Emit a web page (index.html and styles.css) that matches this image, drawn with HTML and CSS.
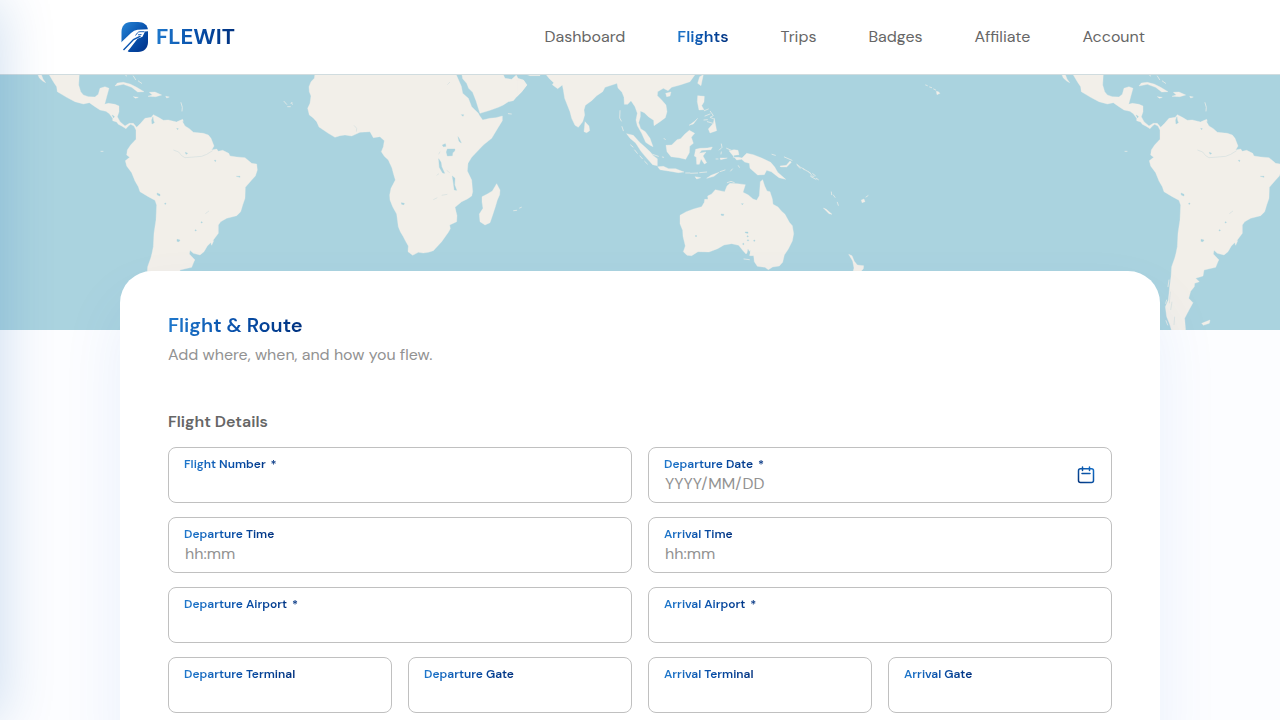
FILE: index.html
```html
<!DOCTYPE html>
<html lang="en">
<head>
<meta charset="utf-8">
<meta name="viewport" content="width=device-width, initial-scale=1">
<title>Flewit – Flight &amp; Route</title>
<link rel="stylesheet" href="styles.css">
</head>
<body>
<header class="header">
  <div class="header-inner">
    <a class="logo" href="#">
      <svg class="logo-mark" viewBox="0 0 28 30" aria-hidden="true">
        <defs><linearGradient id="mark" x1="0" y1="0" x2="1" y2="1"><stop offset="0" stop-color="#2786d6"/><stop offset=".55" stop-color="#0750ac"/><stop offset="1" stop-color="#002f86"/></linearGradient></defs>
        <path fill="url(#mark)" d="M11 0H18C24 0 27.500 3 28 8V20C28 26 24 30 18 30H9L4 27 1.500 20V10C1.500 4 5 0 11 0Z"/>
        <path fill="#fff" d="M0 21.500 11 11Q14 8 17.500 7.800L28 7.200V9.200L25 9.600 22.500 14.800 17.500 16.800 10 26.500 7 30H0Z"/>
        <path fill="none" stroke="#0b55b0" stroke-width="1.400" d="M3.500 28 13.500 17.500 20.500 14.200"/>
        <path fill="none" stroke="#0b55b0" stroke-width=".9" d="M15.500 13.500 17.500 10.800Q18.300 9.800 20 9.700H24.500M18 12.800 21.500 12.500"/>
      </svg>
      <span class="logo-text">FLEWIT</span>
    </a>
    <nav class="nav">
      <a href="#">Dashboard</a>
      <a href="#" class="active" aria-current="page">Flights</a>
      <a href="#">Trips</a>
      <a href="#">Badges</a>
      <a href="#">Affiliate</a>
      <a href="#">Account</a>
    </nav>
  </div>
</header>

<svg class="map" viewBox="0 0 1280 255" preserveAspectRatio="xMidYMin slice" role="img" aria-label="World map">
  <defs>
    <g id="americas" transform="translate(0 -5) scale(.33333)">
      <path d="M145 10 160 35 170 50 172 65 185 73 200 82 225 95 250 102 268 98 285 110 300 120 318 124 328 131 338 145 338 152 350 156 355 163 365 168 378 176 385 168 392 163 402 168 408 180 408 208 392 225 382 240 380 255 389 262 376 272 380 288 395 308 405 333 415 350 420 365 445 380 465 391 470 405 468 450 462 490 460 530 456 550 452 565 443 590 441 620 437 650 433 690 424 710 428 740 438 765 443 783 485 783 482 745 495 720 507 698 494 685 500 664 511 650 512 640 526 635 515 625 537 618 540 600 575 592 583 572 585 570 568 552 570 541 580 550 600 555 612 545 622 528 640 510 655 490 655 465 662 455 680 445 710 437 722 425 728 405 735 385 736 352 755 330 766 318 772 300 770 282 755 280 735 263 710 261 690 258 686 250 668 241 655 244 650 237 635 240 642 228 633 205 625 195 610 190 580 187 568 176 555 168 545 151 530 156 505 150 490 151 475 142 460 134 454 142 435 145 422 160 410 172 400 160 388 160 375 168 360 155 352 140 357 125 357 108 345 103 325 100 314 103 320 80 327 55 315 50 300 55 295 73 285 81 265 80 250 75 242 65 236 45 238 10Z"/>
      <path d="M112 10 125 16 129 27 137 38 128 33 118 24ZM345 48 352 39 370 37 390 42 410 52 432 65 413 66 395 52 370 43ZM444 79 457 75 448 67 465 66 485 75 467 80ZM400 80 415 82 407 85ZM497 79 508 81 500 84ZM533 760 558 750 556 760 538 766ZM532 155 548 148 550 154ZM635 526 630 510 641 512Z"/>
      <g class="water"><path d="M455 150 459 140 460 151 463 158 456 162ZM471 369 480 373 480 378 472 375ZM531 508 540 510 537 515 531 514ZM530 175 535 176 533 179ZM556 247 563 250 558 253ZM709 319 720 319 720 322ZM336 135 343 139 341 144ZM643 271 648 271 646 275Z"/><circle cx="496" cy="401" r="2"/><circle cx="605" cy="457" r="2"/><circle cx="587" cy="481" r="2"/></g>
      <path class="river" d="M638 242 620 253 605 259 570 262 555 263 545 257 536 246 520 240M627 423 616 431M439 665 436 700M444 695 440 720M452 740 450 765"/>
      <path class="isle" d="M543 98 547 112 546 123M375 14 380 18M400 18 407 29M415 33 425 40M303 244 309 244M852 94 860 103M875 99 877 103M863 110 871 110M435 630 432 650M428 690 425 700M426 752 431 765"/>
    </g>
  </defs>
  <g class="land">
    <use href="#americas"/>
    <use href="#americas" x="1024"/>
    <g transform="translate(290 -5) scale(.33333)">
      <path d="M75 10 73 25 63 35 57 50 58 65 63 78 60 100 53 115 58 135 69 143 80 155 87 171 115 190 135 202 150 197 165 195 185 198 210 187 240 185 250 203 270 200 283 212 280 230 274 245 283 259 295 270 306 294 310 310 316 330 303 355 299 375 300 390 308 410 320 432 325 470 331 485 340 500 347 514 355 528 354 545 368 556 385 547 400 549 415 547 430 542 455 515 475 487 481 476 479 465 500 455 501 437 495 412 515 395 532 387 545 378 548 365 545 330 532 303 534 280 545 262 560 246 580 225 605 205 620 180 637 152 637 138 618 143 600 145 578 150 568 136 565 130 545 110 535 85 518 70 514 49 497 10Z"/>
      <path d="M515 10 518 26 530 40 536 55 548 67 558 92 565 115 570 130 600 121 625 112 640 105 655 95 670 92 680 80 695 65 711 45 700 30 684 25 679 15 665 28 645 25 638 10ZM620 341 630 360 629 374 622 390 617 407 609 432 600 458 585 465 570 455 568 432 579 415 576 395 576 380 592 372 607 363ZM700 10 750 10 750 17 720 17Z"/>
      <g class="water"><path d="M472 237 495 237 494 243 488 248 487 257 472 258 469 246ZM446 266 453 277 455 290 464 310 458 309 448 292ZM487 318 495 325 494 345 500 361 493 360 490 338ZM504 200 508 206 514 219 507 214ZM334 398 343 400 342 404 335 403ZM514 134 521 134 519 139ZM457 225 466 221 468 229 460 230Z"/></g>
      <path class="river" d="M430 389 442 383M455 376 472 373M440 316 447 311M470 301 479 308M192 166 200 175 199 185M472 44 480 36M446 253 450 245"/>
      <path class="isle" d="M655 131 664 132M671 422 680 421M689 414 694 412M3 101 6 97"/>
    </g>
    <g transform="translate(520 -5) scale(.33333)">
      <path d="M30 10 75 10 89 27 101 38 97 44 113 56 127 45 130 60 134 85 150 125 155 145 165 166 175 172 188 155 194 135 192 120 196 106 215 92 230 77 248 65 255 52 285 42 291 40 294 54 306 67 312 82 313 103 323 103 333 92 345 110 352 130 348 150 352 167 365 190 377 217 389 225 399 230 390 205 376 185 362 176 356 158 361 140 361 123 373 128 385 140 401 151 402 167 420 155 436 143 441 125 438 105 425 90 412 77 413 65 430 55 444 62 455 52 480 45 510 35 528 10ZM-10 30 10 30 20 45 5 65-10 80ZM195 155 207 168 209 182 200 188 192 185ZM437 70 453 66 450 78 440 80ZM550 14 543 47 533 40 539 20Z"/>
      <path d="M320 191 340 196 358 216 375 231 391 246 400 257 412 266 412 287 398 284 378 262 363 244 347 219 330 205ZM413 290 430 289 446 296 467 296 492 306 475 308 445 303 420 299ZM438 226 455 225 471 209 482 206 494 193 508 181 524 190 514 202 520 220 509 229 508 248 497 268 477 263 453 260 441 245ZM527 238 540 235 562 234 577 231 573 239 545 241 538 250 558 246 549 258 560 278 553 282 543 267 538 283 530 283 529 262 523 258ZM627 242 642 239 654 241 657 254 642 256 640 262 656 262 666 264 680 250 700 254 727 265 752 277 764 291 773 307 797 328 777 323 754 305 740 301 733 314 713 315 690 295 688 280 674 276 665 268 650 270 634 251ZM780 288 799 286 810 273 814 277 800 291 782 291ZM533 77 553 79 552 96 545 107 552 119 537 120 532 95ZM565 177 580 160 583 145 590 182 570 189ZM507 166 525 153 533 145 520 162ZM560 325 573 316 597 307 582 319ZM600 264 622 264 602 269ZM525 320 542 323 530 327Z"/>
      <path class="isle" d="M553 122 565 117M555 138 570 132M552 150 562 149M571 124 580 137 570 142 582 147M562 155 579 160M332 225 339 231M344 240 352 250M360 258 367 266M374 274 382 282M398 253 415 259M427 261 431 262M432 205 436 209M497 309 510 309M512 310 533 309M539 308 560 306M600 305 615 300M604 222 606 232 598 240M604 246 603 252M655 287 658 292M632 303 637 297M793 261 816 271M831 283 843 293M850 296 859 302M866 305 875 315M873 320 888 328M300 122 299 144 304 153M306 170 310 182M620 235 632 240M588 267 594 267M756 253 766 256"/>
      <path d="M480 436 499 425 521 417 545 410 553 397 554 388 564 388 563 378 575 372 586 359 603 363 614 365 621 348 630 340 652 341 676 344 669 367 685 375 699 387 710 391 718 377 721 335 728 329 734 348 741 363 750 365 757 387 759 403 774 411 784 423 795 433 808 457 817 467 821 491 817 513 805 537 793 555 788 577 778 588 758 591 745 599 735 592 712 589 703 575 701 557 689 557 691 541 678 552 668 541 656 526 635 521 612 525 593 536 567 546 534 545 515 557 501 556 490 545 496 528 489 499 488 481 480 461Z"/>
      <path class="isle" d="M672 567 688 569M622 338 633 334 643 338"/>
      <g class="water"><path d="M603 432 612 433 610 437 604 436ZM675 486 684 486 684 490 677 489ZM664 401 670 401 667 404ZM684 538 690 550 682 551Z"/><circle cx="528" cy="498" r="2"/><circle cx="683" cy="499" r="2"/><circle cx="684" cy="511" r="2"/><circle cx="703" cy="512" r="2"/><circle cx="670" cy="522" r="2"/></g>
    </g>
    <g transform="translate(780 -5) scale(.33333)">
      <path d="M206 553 216 557 223 574 232 585 251 587 250 596 238 610 218 610 222 594 218 573ZM130 414 139 418 156 433 147 431ZM244 390 252 387 255 395 246 398ZM469 64 475 65 480 70 471 74Z"/>
      <path class="isle" d="M258 381 264 377M437 45 442 47M449 51 455 53M461 57 467 60M154 366 155 374M160 375 165 382M172 397 175 406M51 285 60 295M65 293 73 299M80 302 92 310M92 318 102 319M98 311 106 317M109 325 115 329"/>
    </g>
  </g>
</svg>

<main class="card">
  <h1 class="title"><span class="tint">Flight &amp; Route</span></h1>
  <p class="subtitle">Add where, when, and how you flew.</p>
  <form>
    <h2 class="section">Flight Details</h2>
    <div class="grid">
      <div class="field wide"><label class="tint" for="number">Flight Number <span class="req">*</span></label><input id="number" type="text" required></div>
      <div class="field wide"><label class="tint" for="date">Departure Date <span class="req">*</span></label><input id="date" type="text" placeholder="YYYY/MM/DD" required>
        <button class="calendar" type="button" aria-label="Choose date">
          <svg viewBox="0 0 18 18" aria-hidden="true"><defs><linearGradient id="cal" gradientUnits="userSpaceOnUse" x1="0" y1="18" x2="18" y2="0"><stop offset="0" stop-color="#003078"/><stop offset="1" stop-color="#1473cf"/></linearGradient></defs><path fill="none" stroke="url(#cal)" stroke-width="1.500" stroke-linecap="round" d="M3.500 2.700H14.500Q16.500 2.700 16.500 4.700V14.500Q16.500 16.500 14.500 16.500H3.500Q1.500 16.500 1.500 14.500V4.700Q1.500 2.700 3.500 2.700ZM5.500 1V4.500M12.500 1V4.500M5 7.500H13"/></svg>
        </button>
      </div>
      <div class="field wide"><label class="tint" for="dep-time">Departure Time</label><input id="dep-time" type="text" placeholder="hh:mm"></div>
      <div class="field wide"><label class="tint" for="arr-time">Arrival Time</label><input id="arr-time" type="text" placeholder="hh:mm"></div>
      <div class="field wide"><label class="tint" for="dep-airport">Departure Airport <span class="req">*</span></label><input id="dep-airport" type="text" required></div>
      <div class="field wide"><label class="tint" for="arr-airport">Arrival Airport <span class="req">*</span></label><input id="arr-airport" type="text" required></div>
      <div class="field"><label class="tint" for="dep-terminal">Departure Terminal</label><input id="dep-terminal" type="text"></div>
      <div class="field"><label class="tint" for="dep-gate">Departure Gate</label><input id="dep-gate" type="text"></div>
      <div class="field"><label class="tint" for="arr-terminal">Arrival Terminal</label><input id="arr-terminal" type="text"></div>
      <div class="field"><label class="tint" for="arr-gate">Arrival Gate</label><input id="arr-gate" type="text"></div>
    </div>
  </form>
</main>
</body>
</html>
```
FILE: styles.css
```css
* { box-sizing: border-box; }

body {
  margin: 0;
  background: #fcfdff;
  color: #666;
  font-family: "DM Sans", Inter, sans-serif;
  font-size: 16px;
  line-height: 24px;
}

body::before {
  content: "";
  position: fixed;
  z-index: 2;
  top: 0;
  left: -80px;
  width: 80px;
  height: 100vh;
  box-shadow: 0 0 56px rgba(0, 85, 175, .2);
  pointer-events: none;
}

.header {
  background: #fff;
  border-bottom: 1px solid #d0dcdf;
}

.header-inner {
  display: flex;
  align-items: center;
  justify-content: space-between;
  max-width: 1040px;
  height: 74px;
  margin: 0 auto;
  padding-right: 15px;
}

.logo {
  display: flex;
  align-items: center;
  gap: 8px;
  text-decoration: none;
}

.logo-mark { width: 28px; height: 30px; }

.logo-text,
.tint,
.nav .active {
  background: linear-gradient(90deg, #1f78cc, #0850aa 50%, #00317f);
  -webkit-background-clip: text;
  background-clip: text;
  color: transparent;
}

.logo-text { font-size: 22px; font-weight: 700; }

.nav { display: flex; gap: 52px; }
.nav a { color: #666; text-decoration: none; }
.nav .active { color: transparent; font-weight: 600; }

.map {
  display: block;
  width: 100%;
  height: 255px;
  background: #aad3df;
}

.land { fill: #f2efe9; stroke: #f2efe9; stroke-linejoin: round; }
.water { fill: #aad3df; stroke: #aad3df; }
.river { fill: none; stroke: #d3dfdf; stroke-width: 2; }
.isle { fill: none; stroke: #dde7e6; stroke-width: 3; stroke-linecap: round; }

.card {
  position: relative;
  max-width: 1040px;
  margin: -59px auto 48px;
  padding: 40px 48px 48px;
  background: #fff;
  border-radius: 32px;
  box-shadow: 0 32px 64px rgba(0, 95, 205, .08);
}

.title {
  margin: 0;
  font-size: 20px;
  font-weight: 600;
  line-height: 28px;
}

.subtitle { margin: 4px 0 0; color: #929292; }

.section {
  margin: 43px 0 13px;
  font-size: 16px;
  font-weight: 600;
  line-height: 24px;
}

.grid {
  display: grid;
  grid-template-columns: repeat(4, 1fr);
  gap: 14px 16px;
}

.field {
  position: relative;
  display: flex;
  flex-direction: column;
  align-items: flex-start;
  height: 56px;
  padding: 8px 15px;
  border: 1px solid #c0c0c0;
  border-radius: 8px;
}

.wide { grid-column: span 2; }

.field label {
  font-size: 12px;
  font-weight: 600;
  line-height: 16px;
}

.req { margin-left: 2px; }

.field input {
  width: 100%;
  height: 24px;
  padding: 0 1px;
  border: 0;
  outline: 0;
  background: none;
  color: #444;
  font: inherit;
}

.field input::placeholder { color: #929292; opacity: 1; }

.field:focus-within { border-color: #0850aa; }

.calendar {
  position: absolute;
  top: 18px;
  right: 16px;
  width: 18px;
  height: 18px;
  padding: 0;
  border: 0;
  background: none;
  cursor: pointer;
}

.calendar svg { display: block; width: 18px; height: 18px; }
```
